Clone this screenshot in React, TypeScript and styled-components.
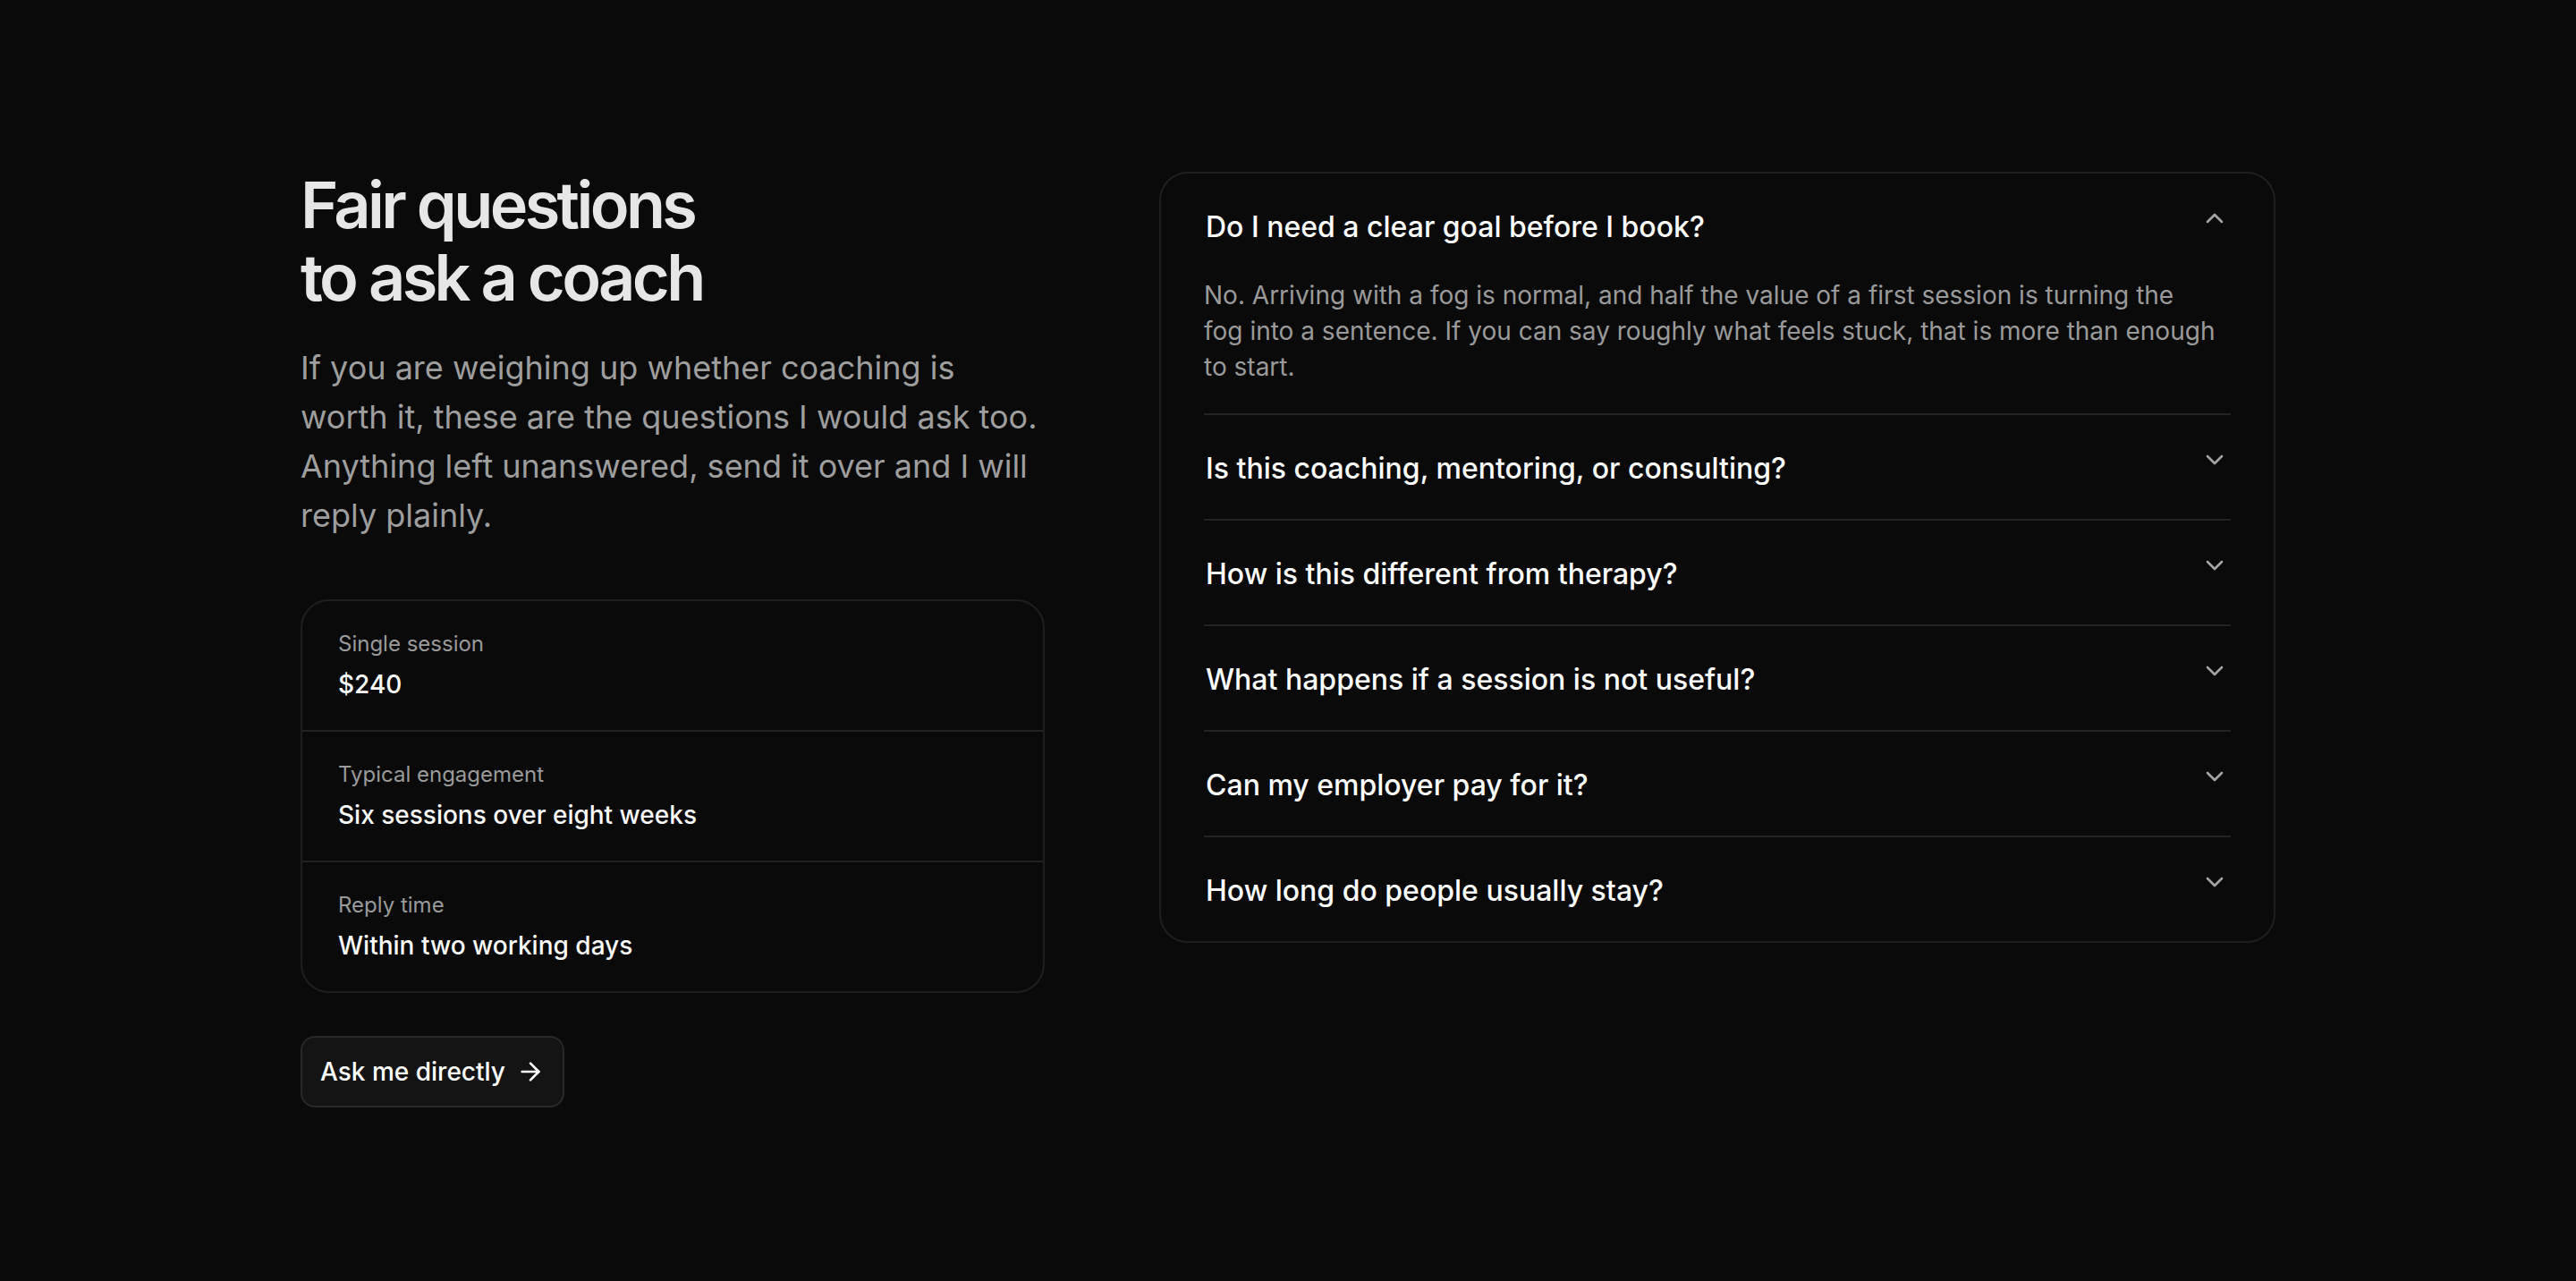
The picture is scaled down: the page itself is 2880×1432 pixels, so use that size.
import React, { useState } from "react";
import styled, { createGlobalStyle } from "styled-components";
import { ChevronDown, ChevronUp, ArrowRight } from "lucide-react";

const GlobalStyle = createGlobalStyle`
  html, body {
    margin: 0;
    padding: 0;
    background: #0a0a0a;
  }
  body {
    min-height: 100vh;
    font-family: "Inter", "Noto Sans", sans-serif;
    color: #fafafa;
    -webkit-font-smoothing: antialiased;
  }
  * { box-sizing: border-box; }
`;

const Page = styled.main`
  min-height: 100vh;
  background: #0a0a0a;
  padding: 192px 0;
`;

const Section = styled.section`
  max-width: 2208px;
  margin: 0 auto;
  display: grid;
  grid-template-columns: 2fr 3fr;
  gap: 128px;
  align-items: start;
`;

const Intro = styled.div`
  display: flex;
  flex-direction: column;
  align-items: flex-start;
`;

const Title = styled.h2`
  margin: -4px 0 34px;
  font-size: 72px;
  line-height: 81px;
  font-weight: 600;
  letter-spacing: -0.05em;
  color: #e6e6e6;
`;

const Lead = styled.p`
  margin: 0 0 66px;
  font-size: 36px;
  line-height: 55px;
  color: #9e9e9e;
  max-width: 832px;
`;

const Facts = styled.dl`
  margin: 0;
  width: 100%;
  border: 2px solid #1f1f1f;
  border-radius: 32px;
  overflow: hidden;
`;

const Fact = styled.div`
  padding: 32px 40px 31px;
  border-top: 2px solid #222222;
  &:first-child { border-top: none; }
  display: flex;
  flex-direction: column;
  gap: 9px;
`;

const FactLabel = styled.dt`
  font-size: 24px;
  line-height: 32px;
  color: #9a9a9a;
`;

const FactValue = styled.dd`
  margin: 0;
  font-size: 28px;
  line-height: 40px;
  font-weight: 500;
  color: #fafafa;
`;

const AskButton = styled.button`
  margin-top: 48px;
  height: 80px;
  padding: 0 20px;
  display: inline-flex;
  align-items: center;
  gap: 12px;
  background: #141414;
  border: 2px solid #292929;
  border-radius: 16px;
  color: #ffffff;
  font-family: "Inter", sans-serif;
  font-size: 28px;
  font-weight: 500;
  cursor: pointer;
`;

const Faq = styled.div`
  border: 2px solid #1f1f1f;
  border-radius: 32px;
  padding: 0 48px;
`;

const Item = styled.div`
  border-top: 2px solid #232323;
  &:first-child { border-top: none; }
`;

const Question = styled.button`
  width: 100%;
  display: flex;
  align-items: flex-start;
  justify-content: space-between;
  gap: 32px;
  padding: 36px 0 32px 2px;
  background: none;
  border: none;
  text-align: left;
  color: #ffffff;
  font-family: "Inter", sans-serif;
  font-size: 32px;
  line-height: 48px;
  font-weight: 500;
  cursor: pointer;
  svg { flex: none; color: #a3a3a3; margin: -2px 2px 0 0; }
`;

const Answer = styled.p`
  margin: 0;
  padding: 0 16px 32px 0;
  font-size: 28px;
  line-height: 40px;
  color: #9a9a9a;
`;

const facts = [
  { label: "Single session", value: "$240" },
  { label: "Typical engagement", value: "Six sessions over eight weeks" },
  { label: "Reply time", value: "Within two working days" },
];

const faqs = [
  {
    q: "Do I need a clear goal before I book?",
    a: "No. Arriving with a fog is normal, and half the value of a first session is turning the fog into a sentence. If you can say roughly what feels stuck, that is more than enough to start.",
  },
  { q: "Is this coaching, mentoring, or consulting?", a: "" },
  { q: "How is this different from therapy?", a: "" },
  { q: "What happens if a session is not useful?", a: "" },
  { q: "Can my employer pay for it?", a: "" },
  { q: "How long do people usually stay?", a: "" },
];

export default function App() {
  const [open, setOpen] = useState<number | null>(0);
  return (
    <>
      <GlobalStyle />
      <Page>
        <Section>
          <Intro>
            <Title>
              Fair questions
              <br />
              to ask a coach
            </Title>
            <Lead>
              If you are weighing up whether coaching is worth it, these are the
              questions I would ask too. Anything left unanswered, send it over
              and I will reply plainly.
            </Lead>
            <Facts>
              {facts.map((f) => (
                <Fact key={f.label}>
                  <FactLabel>{f.label}</FactLabel>
                  <FactValue>{f.value}</FactValue>
                </Fact>
              ))}
            </Facts>
            <AskButton>
              Ask me directly
              <ArrowRight size={32} strokeWidth={2} />
            </AskButton>
          </Intro>
          <Faq>
            {faqs.map((f, i) => (
              <Item key={f.q}>
                <Question onClick={() => setOpen(open === i ? null : i)}>
                  <span>{f.q}</span>
                  {open === i ? <ChevronUp size={32} /> : <ChevronDown size={32} />}
                </Question>
                {open === i && f.a && <Answer>{f.a}</Answer>}
              </Item>
            ))}
          </Faq>
        </Section>
      </Page>
    </>
  );
}
